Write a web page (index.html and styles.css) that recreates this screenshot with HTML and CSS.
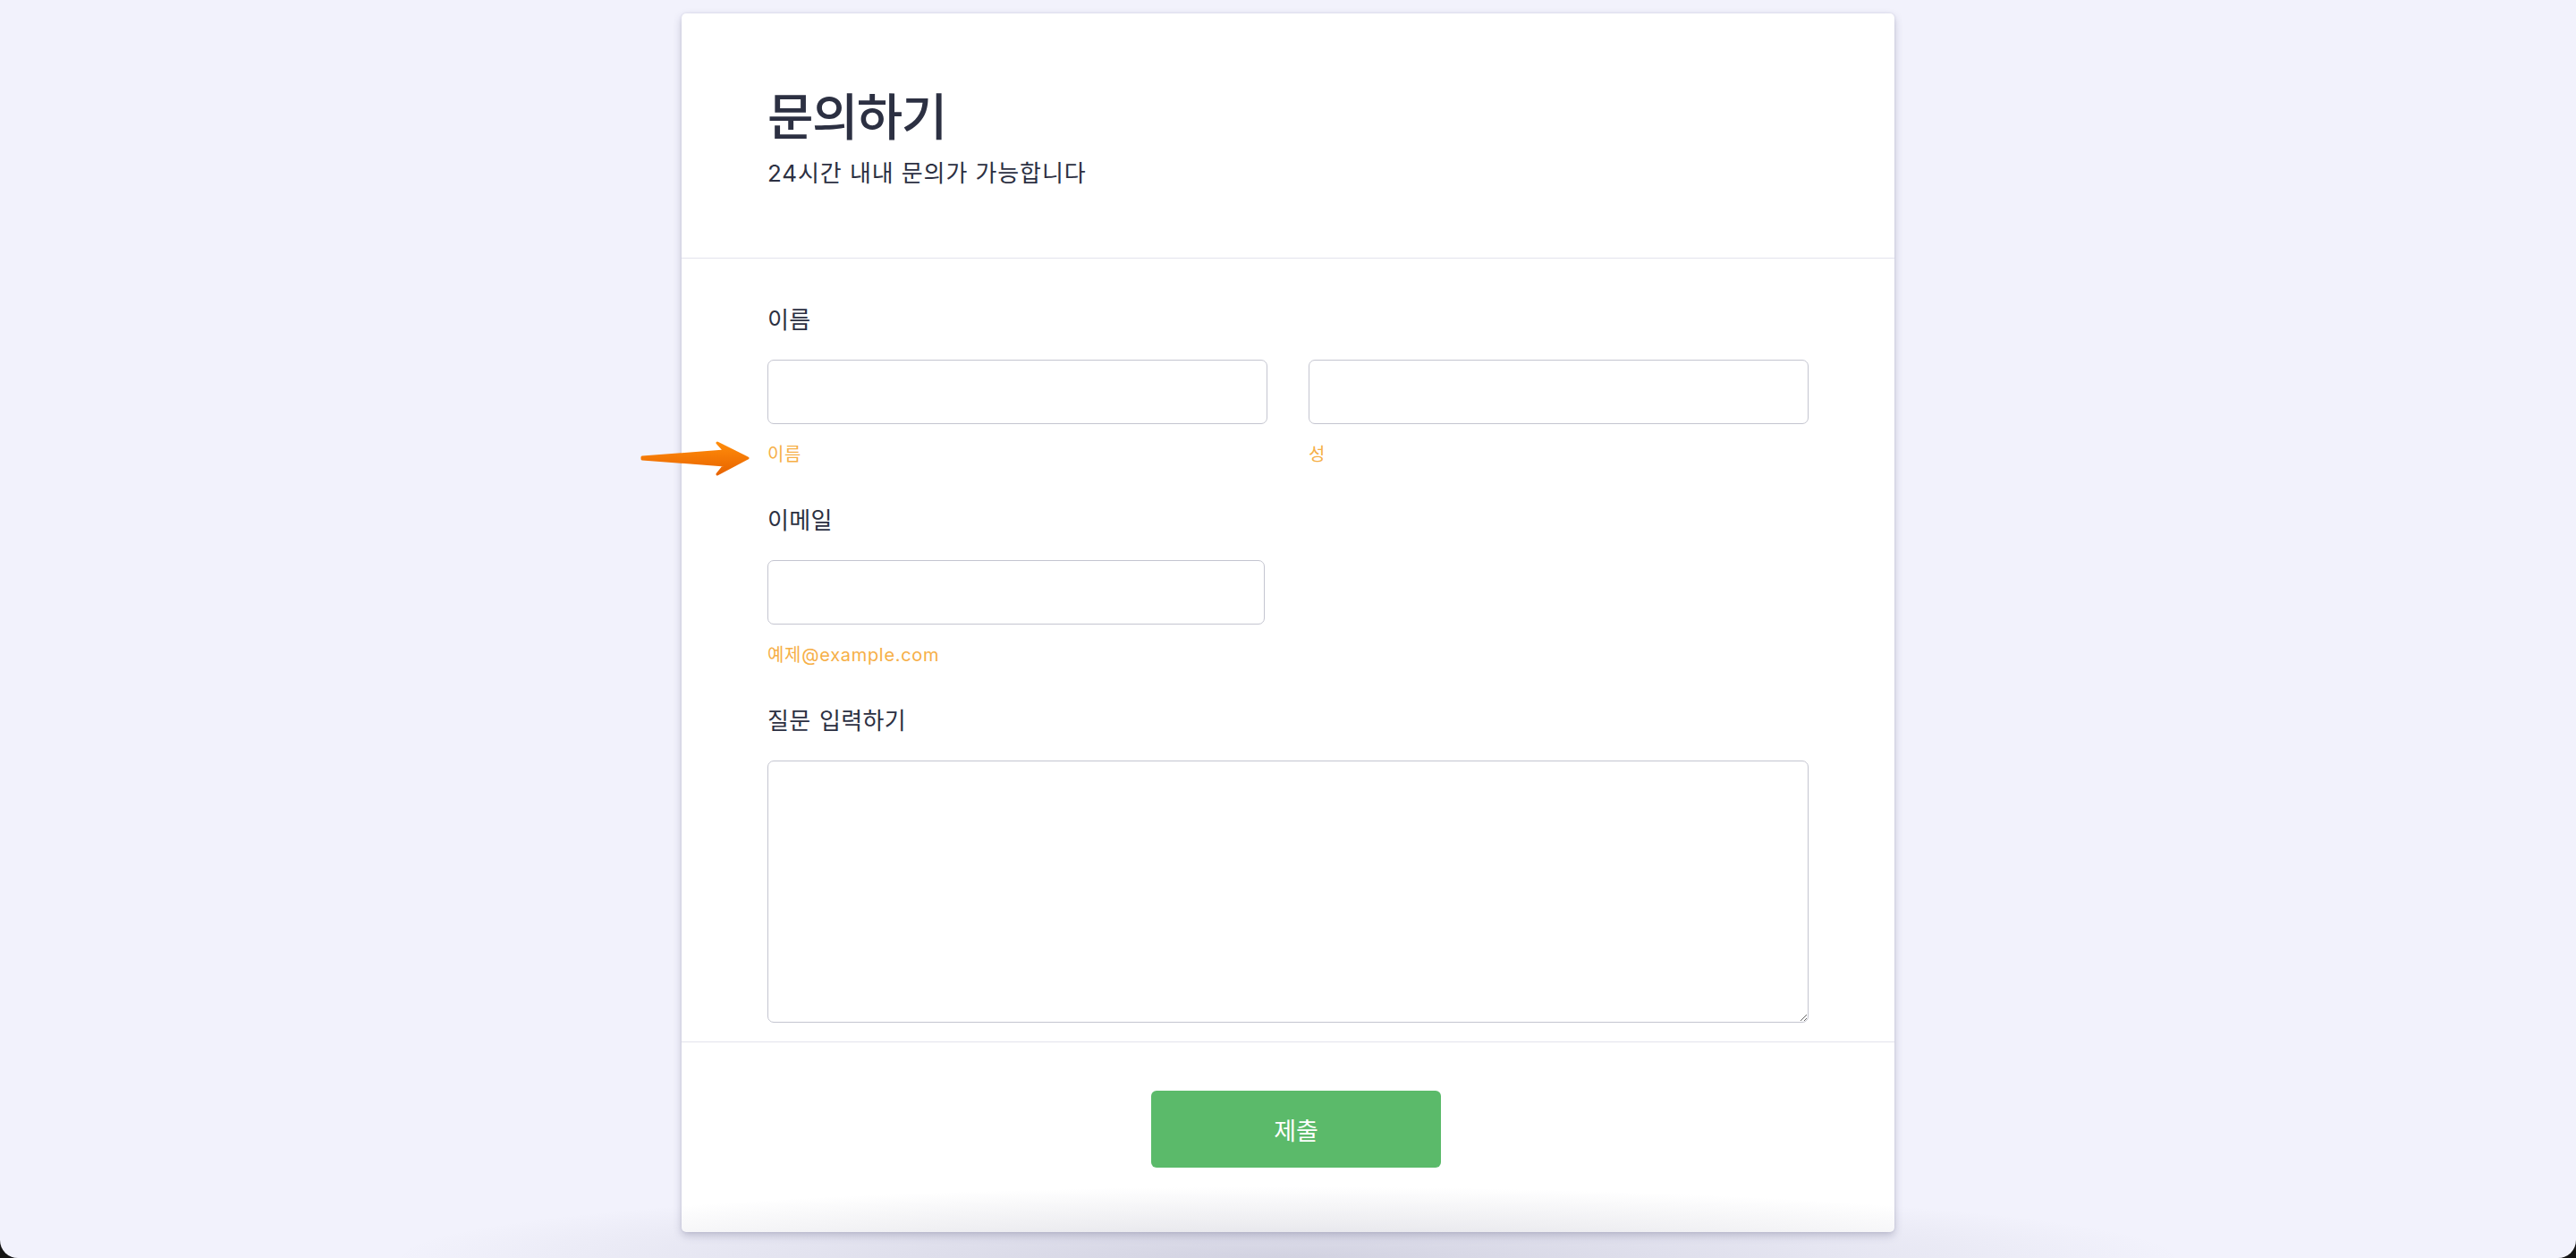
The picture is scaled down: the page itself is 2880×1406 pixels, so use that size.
FILE: index.html
```html
<!DOCTYPE html>
<html lang="ko">
<head>
<meta charset="utf-8">
<title>문의하기</title>
<link rel="stylesheet" href="styles.css">
</head>
<body>
<div class="window">
  <main class="card">
    <header class="card-head">
      <h1 class="title">문의하기</h1>
      <p class="subtitle">24시간 내내 문의가 가능합니다</p>
    </header>
    <form class="card-body">
      <div class="field">
        <label class="label">이름</label>
        <div class="name-row">
          <div class="sub-field">
            <input class="input" type="text">
            <div class="helper helper-pointed">
              <span>이름</span>
              <svg class="arrow" width="125" height="46" viewBox="0 0 125 46">
                <defs>
                  <linearGradient id="ag" x1="0" y1="0" x2="0" y2="1">
                    <stop offset="0" stop-color="#ff8c0a"/>
                    <stop offset="1" stop-color="#e86400"/>
                  </linearGradient>
                </defs>
                <path d="M3 22 L95 15 L87 6 L121 23 L87 41 L95 31 L3 24 Z" fill="url(#ag)" stroke="url(#ag)" stroke-width="3" stroke-linejoin="round"/>
              </svg>
            </div>
          </div>
          <div class="sub-field">
            <input class="input" type="text">
            <div class="helper">성</div>
          </div>
        </div>
      </div>
      <div class="field">
        <label class="label">이메일</label>
        <input class="input input-email" type="email">
        <div class="helper">예제@example.com</div>
      </div>
      <div class="field field-last">
        <label class="label">질문 입력하기</label>
        <textarea class="textarea"></textarea>
      </div>
    </form>
    <footer class="card-foot">
      <button class="submit" type="button">제출</button>
    </footer>
  </main>
  <div class="bottom-shade"></div>
</div>
</body>
</html>
```

FILE: styles.css
```css
html {
  background: #141414;
}
body {
  margin: 0;
  font-family: Inter, "Noto Sans CJK KR", sans-serif;
  color: #2c3042;
}
.window {
  position: relative;
  height: 1406px;
  overflow: hidden;
  background: #f2f2fc;
  border-radius: 0 0 20px 20px;
}
.card {
  position: relative;
  width: 1356px;
  margin: 15px auto 0;
  background: #fff;
  border-radius: 5px;
  box-shadow: 0 0 3px rgba(70, 70, 130, 0.14), 0 4px 10px rgba(60, 60, 100, 0.26);
}
.card-head {
  padding: 84px 96px 78px;
  border-bottom: 1px solid #e3e3ec;
}
.title {
  margin: 0;
  font-size: 56px;
  line-height: 64px;
  font-weight: 500;
  letter-spacing: -1.6px;
}
.subtitle {
  margin: 15px 0 0;
  font-size: 26px;
  line-height: 32px;
  letter-spacing: 0.9px;
}
.card-body {
  padding: 53px 96px 21px;
  border-bottom: 1px solid #e3e3ec;
}
.field {
  display: flex;
  flex-direction: column;
  margin-bottom: 46px;
}
.field-last {
  margin-bottom: 0;
}
.label {
  font-size: 26px;
  line-height: 32px;
  letter-spacing: 0.3px;
  word-spacing: 2px;
  margin-bottom: 28px;
}
.name-row {
  display: grid;
  grid-template-columns: 1fr 1fr;
  column-gap: 46px;
}
.sub-field {
  display: flex;
  flex-direction: column;
}
.input {
  box-sizing: border-box;
  height: 72px;
  margin: 0;
  border: 1.5px solid #c4c5d0;
  border-radius: 7px;
  background: #fff;
  font: inherit;
}
.input-email {
  width: 556px;
}
.helper {
  margin-top: 22px;
  font-size: 20px;
  line-height: 24px;
  color: #f6af47;
  letter-spacing: 0.7px;
}
.helper-pointed {
  position: relative;
}
.arrow {
  position: absolute;
  left: -143px;
  top: -7px;
}
.textarea {
  box-sizing: border-box;
  width: 100%;
  height: 293px;
  margin: 0;
  border: 1.5px solid #c4c5d0;
  border-radius: 7px;
  font: inherit;
  resize: vertical;
}
.card-foot {
  display: flex;
  justify-content: center;
  padding: 54px 0 72px 18px;
}
.submit {
  width: 324px;
  height: 86px;
  border: 0;
  border-radius: 6px;
  background: #5bba6a;
  color: #fff;
  font-family: Inter, "Noto Sans CJK KR", sans-serif;
  font-size: 27px;
  letter-spacing: 0;
}
.bottom-shade {
  position: absolute;
  left: 0;
  right: 0;
  bottom: 0;
  height: 80px;
  pointer-events: none;
  background: radial-gradient(ellipse 1000px 80px at 50% 100%, rgba(80, 80, 115, 0.2), rgba(80, 80, 115, 0.09) 55%, rgba(80, 80, 115, 0) 100%);
}
```
